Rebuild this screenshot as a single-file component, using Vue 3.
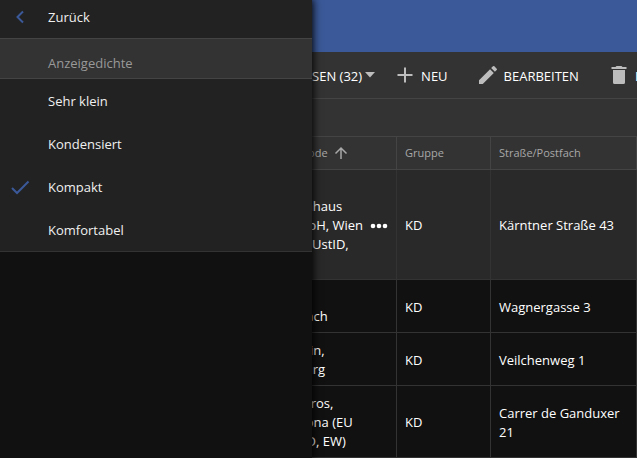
<script setup>
import { ref } from 'vue'

const densities = ['Sehr klein', 'Kondensiert', 'Kompakt', 'Komfortabel']
const selected = ref('Kompakt')

const rows = [
  { code: ['Reformhaus', 'AT GmbH, Wien', 'gültige UstID,'], group: 'KD', street: 'Kärntner Straße 43', active: true },
  { code: ['Bauer,', 'Steinbach'], group: 'KD', street: 'Wagnergasse 3' },
  { code: ['Augustin,', 'Hamburg'], group: 'KD', street: 'Veilchenweg 1' },
  { code: ['Boqueiros,', 'Barcelona (EU', 'o. UstID, EW)'], group: 'KD', street: 'Carrer de Ganduxer 21' },
]
</script>

<template>
  <div class="app">
    <main class="page">
      <header class="brand"></header>

      <div class="toolbar">
        <button type="button" class="tool view">
          <span>ADRESSEN (32)</span>
          <svg width="10" height="6" viewBox="0 0 10 6"><path d="M0 0h10L5 5.500z" fill="#bdbdbd" /></svg>
        </button>
        <button type="button" class="tool">
          <svg width="24" height="24" viewBox="0 0 24 24"><path d="M12 4.500v15M4.500 12h15" stroke="#bdbdbd" stroke-width="2" fill="none" /></svg>
          <span>NEU</span>
        </button>
        <button type="button" class="tool">
          <svg width="24" height="24" viewBox="0 0 24 24"><path d="M3 17.250V21h3.750L17.810 9.940l-3.750-3.750L3 17.250zM20.710 7.040a1 1 0 0 0 0-1.410l-2.340-2.340a1 1 0 0 0-1.410 0l-1.830 1.830 3.750 3.750 1.830-1.830z" fill="#bdbdbd" /></svg>
          <span>BEARBEITEN</span>
        </button>
        <button type="button" class="tool">
          <svg width="24" height="24" viewBox="0 0 24 24"><path d="M6 7v12.500a1.500 1.500 0 0 0 1.500 1.500h9a1.500 1.500 0 0 0 1.500-1.500V7zM19.500 4h-4l-1-1h-5l-1 1h-4v2h15z" fill="#bdbdbd" /></svg>
          <span>LÖSCHEN</span>
        </button>
      </div>

      <div class="filters"></div>

      <table class="grid">
        <thead>
          <tr>
            <th class="code">
              <span class="sort">
                Adresscode
                <svg width="14" height="14" viewBox="0 0 14 14"><path d="M7 13V2M1.500 7.500L7 2l5.500 5.500" stroke="#a8a8a8" stroke-width="1.500" fill="none" /></svg>
              </span>
            </th>
            <th class="group">Gruppe</th>
            <th>Straße/Postfach</th>
          </tr>
        </thead>
        <tbody>
          <tr v-for="row in rows" :key="row.street" :class="{ active: row.active }">
            <td class="code">
              <div class="cell">
                <div>
                  <div v-for="line in row.code" :key="line">{{ line }}</div>
                </div>
                <button v-if="row.active" type="button" class="more" aria-label="Mehr">
                  <svg width="18" height="6" viewBox="0 0 18 6" fill="#fff"><circle cx="3" cy="3" r="2.300" /><circle cx="9" cy="3" r="2.300" /><circle cx="15" cy="3" r="2.300" /></svg>
                </button>
              </div>
            </td>
            <td>{{ row.group }}</td>
            <td>{{ row.street }}</td>
          </tr>
        </tbody>
      </table>
    </main>

    <aside class="drawer">
      <button type="button" class="item back">
        <svg width="24" height="24" viewBox="0 0 24 24"><path d="M15 6.500L9.500 12l5.500 5.500" stroke="#3b5998" stroke-width="2" fill="none" /></svg>
        Zurück
      </button>
      <h2 class="title">Anzeigedichte</h2>
      <div class="options">
        <button
          v-for="name in densities"
          :key="name"
          type="button"
          class="item"
          :aria-pressed="name === selected"
          @click="selected = name"
        >
          <svg width="24" height="24" viewBox="0 0 24 24"><path v-if="name === selected" d="M4 12l5 5L20.500 5.500" stroke="#3b5998" stroke-width="2" fill="none" /></svg>
          {{ name }}
        </button>
      </div>
    </aside>
  </div>
</template>

<style>
body {
  background: #111;
}
</style>

<style scoped>
.app {
  position: relative;
  min-height: 100vh;
  overflow: hidden;
  font-family: "Open Sans", "Noto Sans", sans-serif;
  font-size: 13px;
  line-height: 19px;
  color: #fff;
}

button {
  border: 0;
  padding: 0;
  background: none;
  color: inherit;
  font: inherit;
  cursor: pointer;
}

svg {
  display: block;
  flex: none;
}

.brand {
  height: 52px;
  background: #3b5998;
}

.toolbar {
  display: flex;
  align-items: center;
  height: 46px;
  padding-left: 272px;
  background: #333;
  border-bottom: 1px solid #444;
  overflow: hidden;
}

.tool {
  display: flex;
  flex: none;
  align-items: center;
  gap: 4px;
  padding-right: 28px;
  white-space: nowrap;
}

.tool span {
  padding-top: 2px;
}

.view {
  gap: 3px;
  padding-right: 18px;
}

.filters {
  height: 37px;
  background: #333;
}

.grid {
  width: 100%;
  table-layout: fixed;
  border-collapse: separate;
  border-spacing: 0;
  border-top: 1px solid #444;
}

th,
td {
  padding: 8px 8px 6px;
  border-right: 1px solid #333;
  border-bottom: 1px solid #333;
  text-align: left;
  vertical-align: middle;
}

th {
  height: 18px;
  padding-top: 7px;
  padding-bottom: 7px;
  background: #333;
  border-color: #444;
  color: #a8a8a8;
  font-size: 11px;
  font-weight: 400;
  line-height: 18px;
}

th.code {
  width: 120px;
}

th.group {
  width: 77px;
}

.code {
  padding-left: 268px;
}

.sort {
  display: flex;
  align-items: center;
  gap: 6px;
}

.cell {
  display: flex;
  align-items: center;
  justify-content: space-between;
}

.active td {
  padding-top: 27px;
  padding-bottom: 25px;
  background: #292929;
}

.drawer {
  position: absolute;
  top: 0;
  bottom: 0;
  left: 0;
  width: 312px;
  background: #111;
  box-shadow: 0 0 8px 1px #000;
}

.item {
  display: flex;
  align-items: center;
  gap: 16px;
  width: 100%;
  height: 43px;
  padding-top: 2px;
  padding-left: 8px;
  background: #222;
  color: #f0f0f0;
  font-weight: 500;
}

.back {
  height: 38px;
  padding-top: 0;
  padding-bottom: 4px;
}

.title {
  margin: 0;
  padding: 15px 48px 5px;
  background: #333;
  border-top: 1px solid #444;
  border-bottom: 1px solid #444;
  color: #999;
  font-size: 13px;
  font-weight: 400;
}

.options {
  border-bottom: 1px solid #333;
}
</style>
